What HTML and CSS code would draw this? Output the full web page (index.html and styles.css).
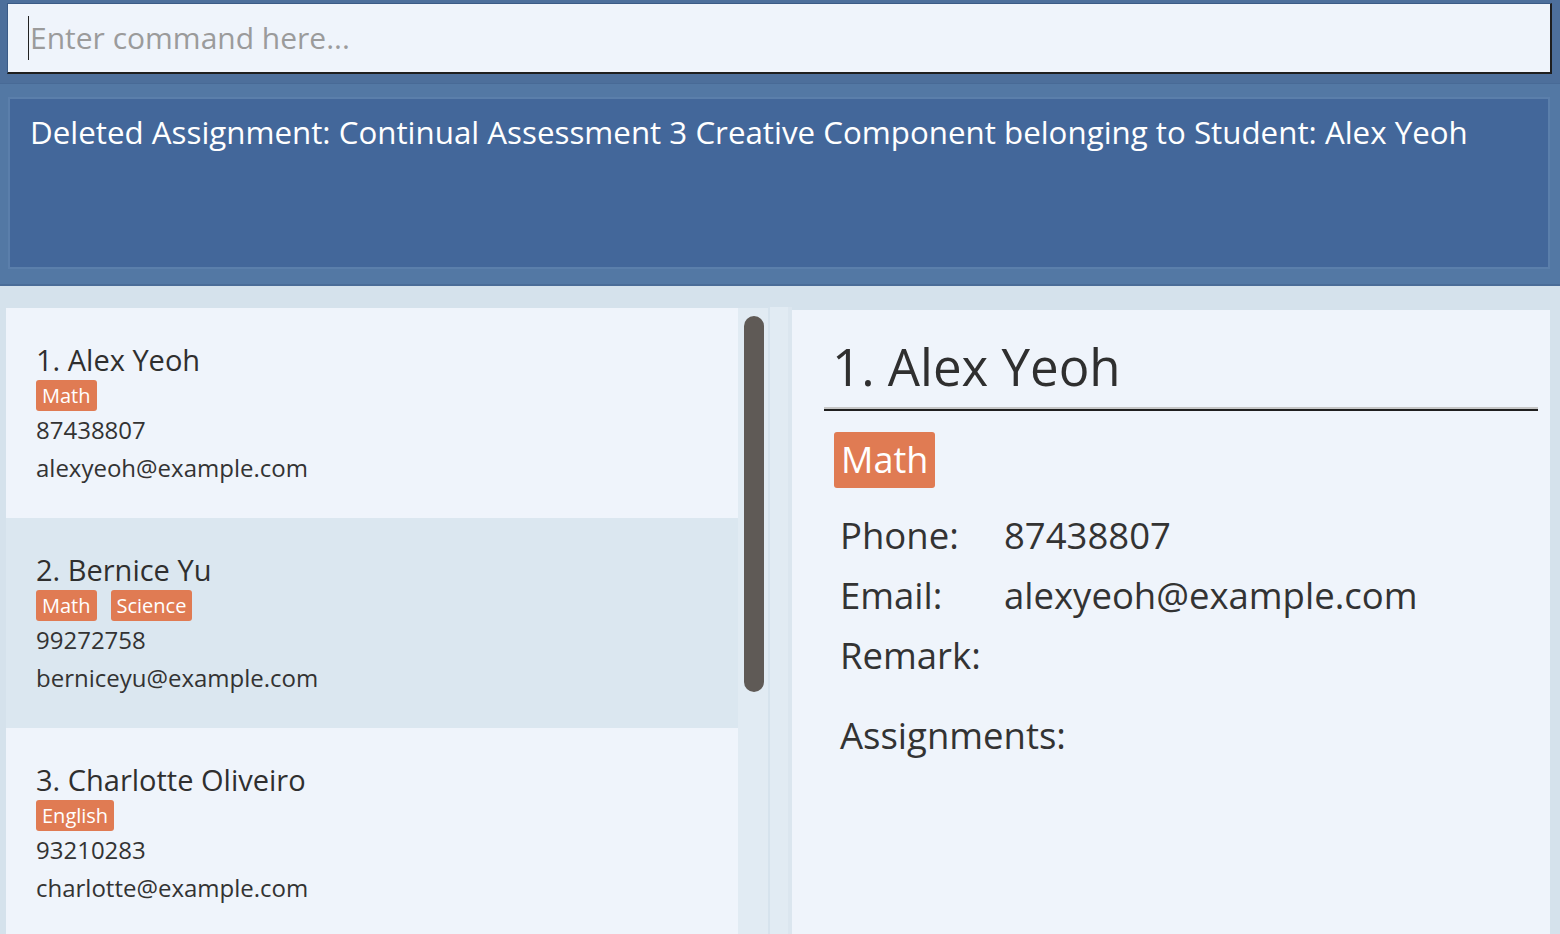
FILE: index.html
```html
<!DOCTYPE html>
<html lang="en">
<head>
<meta charset="utf-8">
<title>Address Book</title>
<link rel="stylesheet" href="styles.css">
</head>
<body>
<div class="app">
  <div class="command-bar">
    <div class="command-box">
      <span class="caret"></span>
      <span class="placeholder">Enter command here...</span>
    </div>
  </div>
  <div class="result-bar">
    <div class="result-box">Deleted Assignment: Continual Assessment 3 Creative Component belonging to Student: Alex Yeoh</div>
  </div>
  <div class="main">
    <div class="list-pane">
      <div class="list">
        <div class="card">
          <div class="card-name">1. Alex Yeoh</div>
          <div class="tags"><span class="tag">Math</span></div>
          <div class="card-line">87438807</div>
          <div class="card-line">alexyeoh@example.com</div>
        </div>
        <div class="card selected">
          <div class="card-name">2. Bernice Yu</div>
          <div class="tags"><span class="tag">Math</span><span class="tag">Science</span></div>
          <div class="card-line">99272758</div>
          <div class="card-line">berniceyu@example.com</div>
        </div>
        <div class="card">
          <div class="card-name">3. Charlotte Oliveiro</div>
          <div class="tags"><span class="tag">English</span></div>
          <div class="card-line">93210283</div>
          <div class="card-line">charlotte@example.com</div>
        </div>
      </div>
      <div class="scroll-track"><div class="scroll-thumb"></div></div>
    </div>
    <div class="gutter"></div>
    <div class="detail">
      <div class="detail-title">1. Alex Yeoh</div>
      <div class="detail-tags"><span class="detail-tag">Math</span></div>
      <div class="info">
        <div class="info-row"><span class="info-label">Phone:</span><span class="info-value">87438807</span></div>
        <div class="info-row"><span class="info-label">Email:</span><span class="info-value">alexyeoh@example.com</span></div>
        <div class="info-row"><span class="info-label">Remark:</span><span class="info-value"></span></div>
        <div class="info-row assignments"><span class="info-label">Assignments:</span></div>
      </div>
    </div>
  </div>
</div>
</body>
</html>
```
FILE: styles.css
```css
* { box-sizing: border-box; }
html, body {
  margin: 0;
  padding: 0;
  width: 1560px;
  height: 934px;
  overflow: hidden;
  background: #d5e2ec;
  font-family: "Open Sans", "DejaVu Sans", sans-serif;
  color: #333333;
}
.app {
  display: flex;
  flex-direction: column;
  height: 934px;
}
.command-bar {
  height: 83px;
  background: #4d6f9b;
  padding: 3px 8px 0 7px;
}
.command-box {
  height: 71px;
  background: #eff4fb;
  border-top: 1px solid #3b5b86;
  border-left: 1px solid #3b5b86;
  border-right: 2px solid #1e1e1e;
  border-bottom: 2px solid #1e1e1e;
  display: flex;
  align-items: center;
  padding-left: 20px;
}
.caret {
  width: 1px;
  height: 44px;
  background: #222;
  margin-right: 1px;
}
.placeholder {
  font-size: 30px;
  color: #9b9b9b;
  line-height: 40px;
}
.result-bar {
  height: 203px;
  background: #5378a4;
  border-top: 1px solid #486a96;
  border-bottom: 2px solid #4a6c97;
  padding: 13px 10px 0 8px;
}
.result-box {
  height: 172px;
  background: #43679a;
  border: 2px solid #5b7fab;
  color: #ffffff;
  font-size: 31.3px;
  line-height: 40px;
  padding: 13px 0 0 20px;
}
.main {
  flex: 1;
  display: flex;
  padding: 22px 0 0 6px;
  min-height: 0;
}
.list-pane {
  display: flex;
  width: 762px;
}
.list {
  width: 732px;
  background: #eff4fb;
  display: flex;
  flex-direction: column;
}
.card {
  height: 210px;
  flex-shrink: 0;
  padding: 34px 0 0 30px;
  background: #eff4fb;
}
.card.selected { background: #dbe7f0; }
.card-name {
  font-size: 29px;
  line-height: 36px;
  color: #2f2f2f;
}
.tags {
  display: flex;
  gap: 14px;
  margin-top: 2px;
}
.tag {
  background: #e07b53;
  color: #ffffff;
  font-size: 20px;
  line-height: 31px;
  padding: 0 6px;
  border-radius: 3px;
}
.card-line {
  font-size: 24px;
  line-height: 38px;
  color: #333333;
}
.scroll-track {
  width: 30px;
  background: #e1ebf3;
  padding: 8px 4px 0 6px;
}
.scroll-thumb {
  width: 20px;
  height: 376px;
  background: #5f5a56;
  border-radius: 10px;
}
.gutter {
  width: 24px;
  margin-top: -1px;
  background: #e1ebf3;
  border-left: 2px solid #d6e3ed;
  border-right: 4px solid #dbe6ef;
}
.detail {
  width: 758px;
  margin-top: 2px;
  background: #eff4fb;
  padding: 21px 12px 0 32px;
}
.detail-title {
  font-size: 51px;
  line-height: 70px;
  padding: 0 0 8px 8px;
  border-bottom: 2px solid #1f1f1f;
  background: linear-gradient(to top, #c6c6c6 2px, transparent 2px);
  color: #2f2f2f;
}
.detail-tags {
  display: flex;
  margin-top: 21px;
  padding-left: 10px;
}
.detail-tag {
  background: #e07b53;
  color: #ffffff;
  font-size: 36px;
  line-height: 56px;
  padding: 0 7px;
  border-radius: 3px;
}
.info {
  margin-top: 17px;
  padding-left: 16px;
}
.info-row {
  display: flex;
  font-size: 36.5px;
  line-height: 60px;
  color: #333333;
}
.info-label {
  width: 164px;
  flex-shrink: 0;
}
.info-row.assignments {
  margin-top: 20px;
}
```
